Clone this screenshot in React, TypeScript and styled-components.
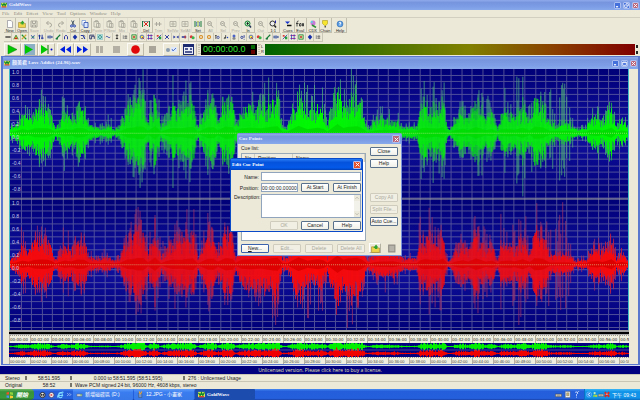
import React from 'react';
import styled, { createGlobalStyle, css } from 'styled-components';

const UI = '"Liberation Sans", "Noto Sans CJK TC", sans-serif';
const SERIF = '"Liberation Serif", "Noto Sans CJK TC", serif';

const GlobalStyle = createGlobalStyle`
  * { box-sizing: border-box; }
  html, body, #root { height: 100%; }
  body { margin: 0; overflow: hidden; background: #ece9d8; font: 5px/6px ${UI}; color: #222; }
  button, input, textarea { font: inherit; color: inherit; margin: 0; padding: 0; }
  button { border: 0; background: none; }
`;

const Desktop = styled.div`
  display: flex;
  flex-direction: column;
  min-height: 100vh;
`;

const TitleBar = styled.header<{ $active?: boolean; $height: number }>`
  display: flex;
  flex: none;
  align-items: center;
  gap: 2px;
  height: ${p => p.$height}px;
  padding: 0 1px;
  font: bold 5px/8px ${SERIF};
  color: ${p => (p.$active ? '#fff' : '#eef3ff')};
  background: ${p =>
    p.$active
      ? 'linear-gradient(#2a7df5, #0553dd 30%, #0458e8 80%, #0340b8)'
      : 'linear-gradient(#8fabec, #7794df 25%, #7d9ee6 70%, #88a9ea)'};
  h1, h2 { flex: 1; margin: 0; font: inherit; white-space: nowrap; }
`;

const CaptionButton = styled.button<{ $close?: boolean; $active?: boolean }>`
  display: grid;
  place-items: center;
  width: 7px;
  height: 7px;
  border: 1px solid #a9bdf0;
  border-radius: 1px;
  color: #fff;
  background: ${p => (p.$close ? (p.$active ? '#e2512b' : '#b9657c') : '#4470dc')};
  svg { width: 5px; height: 5px; }
`;

const MenuBar = styled.nav`
  display: flex;
  gap: 4px;
  height: 8px;
  padding: 1px 2px;
  border-bottom: 1px solid #d2cfc0;
  font-family: ${SERIF};
  button { height: 6px; color: #8f8d82; line-height: 6px; }
`;

const ToolRow = styled.div`
  display: flex;
  flex: none;
  height: 15px;
  padding-left: 4px;
  gap: 2px;
`;

const ToolGroup = styled.div<{ $width: number }>`
  display: flex;
  width: ${p => p.$width}px;
`;

const ToolButton = styled.button<{ $off?: boolean }>`
  display: flex;
  flex: 1 1 0;
  min-width: 0;
  flex-direction: column;
  align-items: center;
  padding-top: 2px;
  font-size: 4px;
  line-height: 5px;
  white-space: nowrap;
  color: ${p => (p.$off ? '#aaa89c' : '#222')};
  border-right: 1px solid ${p => (p.$off ? '#e2dfd0' : '#c2bfae')};
  border-bottom: 1px solid ${p => (p.$off ? '#e2dfd0' : '#c2bfae')};
  svg { width: 8px; height: 8px; flex: none; }
`;

const EffectRow = styled.div`
  display: flex;
  flex: none;
  width: 319px;
  height: 9px;
  margin-left: 4px;
`;

const EffectButton = styled.button`
  display: grid;
  flex: 1 1 0;
  min-width: 0;
  place-items: center;
  border-right: 1px solid #cbc8b8;
  border-bottom: 1px solid #cbc8b8;
  svg { width: 6px; height: 6px; }
`;

const ControlRow = styled.div`
  display: flex;
  flex: none;
  align-items: center;
  height: 14px;
  padding: 0 2px 0 4px;
`;

const TransportButton = styled.button<{ $off?: boolean; $gap?: number }>`
  display: grid;
  place-items: center;
  width: 17px;
  height: 13px;
  margin-right: ${p => p.$gap ?? 0}px;
  border: 1px solid;
  border-color: ${p => (p.$off ? '#ece9d8' : '#fbfaf4 #bdbaaa #bdbaaa #fbfaf4')};
  svg { width: 13px; height: 11px; }
`;

const Grip = styled.i`
  width: 2px;
  height: 10px;
  margin: 0 1px;
  border: 1px dotted #c8c5b5;
`;

const Clock = styled.output`
  display: flex;
  align-items: center;
  justify-content: space-between;
  width: 56px;
  height: 11px;
  padding: 0 2px;
  background: #000;
  color: #2ee62e;
  font: 9px/11px ${UI};
`;

const Lamps = styled.span`
  display: grid;
  gap: 1px;
  i { width: 4px; height: 4px; background: #006400; }
  i + i { background: #640000; }
`;

const MeterLabels = styled.span`
  display: grid;
  width: 4px;
  font-size: 4px;
  line-height: 5px;
`;

const Meter = styled.div`
  flex: 1;
  height: 11px;
  background: linear-gradient(90deg, #006400, #808000 55%, #8a4000 78%, #800000);
`;

const Peaks = styled.span`
  display: grid;
  gap: 3px;
  margin-left: 1px;
  i { width: 2px; height: 3px; background: #222; }
`;

const Document = styled.section`
  display: flex;
  flex: 1;
  flex-direction: column;
  border: 1px solid #5b78cf;
  border-width: 1px 2px;
  margin: 0 0 0 1px;
  background: #ece9d8;
`;

const DocumentBody = styled.div`
  display: flex;
  flex: 1;
  flex-direction: column;
  margin: 0 9px 0 6px;
`;

const Tracks = styled.div`
  display: grid;
  position: relative;
  flex: 1;
  min-height: 200px;
  background: #000080;
  border-left: 1px solid #3fb9c8;
  border-right: 1px solid #3fb9c8;
  > svg { position: absolute; inset: 0; width: 100%; height: 100%; }
`;

const Scale = styled.div`
  display: flex;
  position: relative;
  flex-direction: column;
  justify-content: space-between;
  padding: 0 0 7px 2px;
  font-size: 5px;
  line-height: 6px;
  color: #c8cce8;
`;

const BlackBar = styled.div`
  flex: none;
  height: 5px;
  border-top: 2px solid #a0a0a0;
  border-bottom: 1px solid #aaa;
  background: #000;
`;

const Ruler = styled.div<{ $dim?: boolean }>`
  display: flex;
  flex: none;
  height: ${p => (p.$dim ? 7 : 8)}px;
  overflow: hidden;
  background: #f0eedf;
  font: 4px/6px ${p => (p.$dim ? UI : '"DejaVu Sans", sans-serif')};
  color: ${p => (p.$dim ? '#44443e' : '#2a2a26')};
`;

const Tick = styled.span<{ $span: number }>`
  flex: ${p => p.$span} 1 0;
  min-width: 0;
  padding-top: 2px;
  line-height: 6px;
  overflow: hidden;
  white-space: nowrap;
  background: repeating-linear-gradient(90deg, #9a988c 0 1px, transparent 1px 2px) 0 0 / 100% 1px no-repeat;
  border-left: 1px solid #b3b0a2;
`;

const Overview = styled.div`
  flex: none;
  height: 14px;
  background: #000080;
  svg { display: block; width: 100%; height: 100%; }
`;

const Banner = styled.a`
  flex: none;
  height: 9px;
  border-top: 1px solid #d7dcf0;
  background: #000080;
  color: #e6e4b0;
  font: 5px/8px "Open Sans", sans-serif;
  text-align: center;
  text-decoration: none;
`;

const StatusRow = styled.div`
  display: grid;
  flex: none;
  grid-template-columns: 28px 45px 113px 1fr;
  height: 7px;
  align-items: center;
  border-top: 1px solid #c9c6b6;
  font-size: 5px;
  white-space: nowrap;
`;

const Cell = styled.span<{ $center?: boolean; $wide?: boolean }>`
  display: flex;
  align-items: center;
  justify-content: space-between;
  padding-right: 1px;
  span { flex: 1; text-align: ${p => (p.$center ? 'center' : 'left')}; padding-left: ${p => (p.$center ? 0 : 2)}px; }
  ${p => p.$wide && css`grid-column: 3 / -1; padding-left: 0;`}
  &:first-child span { padding-left: 5px; }
  i { width: 2px; height: 4px; border: 1px solid #77756a; }
`;

const Taskbar = styled.footer`
  display: flex;
  flex: none;
  height: 11px;
  margin-top: 1px;
  background: linear-gradient(#4b8cf2, #245edb 20%, #2560dc 85%, #1941a5);
  color: #fff;
`;

const StartButton = styled.button`
  display: flex;
  align-items: center;
  justify-content: center;
  gap: 2px;
  width: 34px;
  border-radius: 0 4px 4px 0;
  background: linear-gradient(#6cb865, #37923a 25%, #3a993c 80%, #277029);
  font: italic bold 6px/10px ${UI};
  color: #fff;
  svg { width: 8px; height: 8px; }
`;

const QuickLaunch = styled.div`
  display: flex;
  align-items: center;
  gap: 2px;
  width: 39px;
  padding-left: 5px;
  svg { width: 7px; height: 8px; }
`;

const TaskButton = styled.button<{ $active?: boolean }>`
  display: flex;
  align-items: center;
  gap: 2px;
  width: 60px;
  margin-right: 1px;
  padding-left: 3px;
  border-radius: 1px;
  font: ${p => (p.$active ? `bold 5px/9px ${SERIF}` : `5px/9px ${UI}`)};
  white-space: nowrap;
  color: #fff;
  background: ${p => (p.$active ? '#1b4cae' : 'linear-gradient(#5a9bf8, #3a7df0 30%, #3878e8)')};
  svg { width: 7px; height: 7px; flex: none; }
`;

const TrayIcons = styled.div`
  display: flex;
  align-items: center;
  gap: 2px;
  margin-left: auto;
  padding-right: 4px;
  svg { width: 7px; height: 7px; }
`;

const Tray = styled.div`
  display: flex;
  align-items: center;
  padding: 0 4px 0 1px;
  border-left: 1px solid #0b6fc4;
  background: linear-gradient(#3fb6f4, #0f93e8 25%, #1193e9 80%, #0a6cc0);
  font-size: 5px;
  line-height: 10px;
  white-space: nowrap;
  svg { width: 6px; height: 7px; }
  time { margin-left: 2px; }
`;

const Dialog = styled.section<{ $active?: boolean }>`
  position: absolute;
  display: flex;
  flex-direction: column;
  border: 1px solid ${p => (p.$active ? '#0a49c8' : '#7b93dc')};
  border-radius: 2px 2px 0 0;
  background: #ece9d8;
  ${CaptionButton} { width: 8px; height: 8px; }
`;

const CueDialog = styled(Dialog)`
  left: 237px;
  top: 133px;
  width: 165px;
  height: 123px;
`;

const EditDialog = styled(Dialog)`
  left: 230px;
  top: 158px;
  width: 133px;
  height: 74px;
`;

const CueBody = styled.div`
  display: grid;
  flex: 1;
  grid-template-columns: 125px 28px;
  grid-template-rows: 6px 1fr 10px;
  column-gap: 4px;
  row-gap: 2px;
  padding: 1px 3px 2px;
`;

const CueLabel = styled.label`
  line-height: 7px;
`;

const CueTable = styled.table`
  width: 100%;
  height: 100%;
  border: 1px solid #9aa9b8;
  border-collapse: separate;
  border-spacing: 0;
  table-layout: fixed;
  background: #fff;
  th {
    height: 8px;
    padding: 0 0 0 3px;
    border-right: 1px solid #d0cdbd;
    background: #efecdf;
    font-weight: normal;
    line-height: 6px;
    text-align: left;
  }
  th:nth-child(1) { width: 13px; }
  th:nth-child(2) { width: 38px; }
  td { padding: 0; }
`;

const SideButtons = styled.div`
  display: flex;
  grid-row: 1 / 3;
  grid-column: 2;
  flex-direction: column;
  gap: 3px;
  padding-top: 2px;
`;

const Spacer = styled.div`
  flex: none;
  height: 19px;
`;

const BottomButtons = styled.div`
  display: grid;
  grid-column: 1 / -1;
  grid-template-columns: repeat(4, 28px) 12px 12px;
  column-gap: 4px;
  align-items: center;
  svg { width: 9px; height: 9px; justify-self: center; }
`;

const DialogButton = styled.button<{ $strong?: boolean }>`
  width: 28px;
  height: 9px;
  border: 1px solid ${p => (p.$strong ? '#3a62ad' : '#58708c')};
  border-radius: 1px;
  background: linear-gradient(#fff, #f1f0e8);
  font-size: 5px;
  line-height: 7px;
  text-align: center;
  white-space: nowrap;
  &:disabled { border-color: #cfccbd; background: #f1efe4; color: #aaa89b; }
`;

const IconButton = styled.button`
  display: grid;
  place-items: center;
  height: 10px;
  border: 1px solid;
  border-color: #fff #b5b2a2 #b5b2a2 #fff;
`;

const EditForm = styled.form`
  display: grid;
  flex: 1;
  grid-template-columns: 25px 37px 29px 30px;
  grid-template-rows: 9px 9px 24px 10px;
  column-gap: 2px;
  row-gap: 2px;
  padding: 2px 3px;
  align-items: center;
  label { text-align: right; }
  label[for='description'] { align-self: start; }
  button { justify-self: end; }
`;

const fieldStyle = css`
  width: 100%;
  height: 100%;
  border: 1px solid #90a5bd;
  border-radius: 0;
  background: #fff;
  font-size: 5px;
  line-height: 7px;
`;

const Field = styled.input<{ $wide?: boolean }>`
  ${fieldStyle}
  ${p => p.$wide && css`grid-column: 2 / -1;`}
`;

const DescriptionBox = styled.div`
  display: grid;
  grid-column: 2 / -1;
  grid-template-columns: 1fr 6px;
  height: 100%;
  border: 1px solid #90a5bd;
  background: #fff;
`;

const Description = styled.textarea`
  ${fieldStyle}
  border: 0;
  resize: none;
  overflow: hidden;
`;

const ScrollTrack = styled.div`
  display: flex;
  flex-direction: column;
  justify-content: space-between;
  background: #f3f2ea;
  color: #aaa89a;
  svg { width: 6px; height: 6px; background: #eceadd; }
`;

/* ---------- icons ---------- */

const shapes: Record<string, React.ReactNode> = {
  doc: <path d="M3 1h7l3 3v11H3z" fill="#fff" stroke="#667" />,
  folder: <><path d="M1 5h5l2 2h7v8H1z" fill="#efd44c" stroke="#997d20" /><path d="M4 7l5-6 4 5h-2v3H7V7z" fill="#31a52e" /></>,
  save: <path d="M2 2h12v12H2zM5 2v5h6V2M5 14v-4h6v4" fill="none" stroke="currentColor" strokeWidth="2" />,
  undo: <path d="M3 6h6a4 4 0 010 8M7 2L3 6l4 4" fill="none" stroke="currentColor" strokeWidth="2" />,
  redo: <path d="M13 6H7a4 4 0 000 8M9 2l4 4-4 4" fill="none" stroke="currentColor" strokeWidth="2" />,
  cut: <><path d="M5 1l5 9M10 1L6 10" stroke="#456" strokeWidth="2" /><circle cx="5" cy="12" r="2" fill="none" stroke="#2244bb" strokeWidth="2" /><circle cx="11" cy="12" r="2" fill="none" stroke="#2244bb" strokeWidth="2" /></>,
  copy: <><path d="M2 1h7v9H2z" fill="#fff" stroke="#36c" /><path d="M6 5h8v10H6z" fill="#dbe6ff" stroke="#24a" strokeWidth="1.5" /></>,
  paste: <path d="M2 3h9v11H2zM5 1h4v3H5zM7 7h7v8H7z" fill="none" stroke="currentColor" strokeWidth="1.6" />,
  del: <><path d="M1 2v12M15 2v12" stroke="#1b7a48" strokeWidth="2" /><path d="M4 4l8 8M12 4l-8 8" stroke="#d22" strokeWidth="2" /><path d="M1 3h14" stroke="#234" /></>,
  trim: <path d="M1 8h14M5 4v8M11 4v8" stroke="currentColor" strokeWidth="2" />,
  box: <path d="M2 3h12v10H2zM4 8h8M8 3v10" fill="none" stroke="currentColor" strokeWidth="1.6" />,
  set: <><path d="M2 2v12M14 2v12" stroke="#167b3c" strokeWidth="2" /><path d="M5 4h6v8H5z" fill="#b8e3f7" stroke="#248" /><path d="M8 2v12" stroke="#cc3" strokeWidth="2" /></>,
  lens: <path d="M10 10l4 5M7 3a4 4 0 110 8 4 4 0 010-8M5 7h4" fill="none" stroke="currentColor" strokeWidth="2" />,
  lensOn: <><path d="M10 10l4 5" stroke="#235" strokeWidth="3" /><circle cx="7" cy="7" r="5" fill="#b5efc0" stroke="#187c35" strokeWidth="2" /><path d="M5 7h5M7 4v6" stroke="#111" strokeWidth="1.5" /></>,
  one: <><path d="M10 10l4 5" stroke="#222" strokeWidth="3" /><circle cx="7" cy="7" r="5" fill="#eee" stroke="#333" strokeWidth="2" /><path d="M13 1v5" stroke="#22a" strokeWidth="2" /></>,
  cue: <><path d="M2 3h10L7 8z" fill="#1532c9" /><path d="M6 11h9" stroke="#111" strokeWidth="3" /></>,
  foo: <path d="M5 2q-3 0-3 3v8M0 7h5M8 7h2v5H7V7M13 7h2v5h-2z" fill="none" stroke="#333" strokeWidth="1.8" />,
  cdx: <><circle cx="8" cy="6" r="5" fill="#c779d8" /><path d="M8 6L3 5a5 5 0 013-4z" fill="#51dbe0" /><path d="M6 10l8 5" stroke="#2c8f35" strokeWidth="3" /></>,
  bulb: <><path d="M3 1h10v6l-3 4H7L3 7z" fill="#f6e52c" stroke="#9c8c10" /><path d="M7 12h3v3H7z" fill="#555" /></>,
  help: <><circle cx="8" cy="8" r="6" fill="#5899df" stroke="#2864aa" /><path d="M6 6q3-3 4 0l-2 3v2" fill="none" stroke="#fff" strokeWidth="2" /></>,
  start: <><path d="M1 3l5-1v5H1z" fill="#f0522a" /><path d="M8 2l6 1v5L8 7z" fill="#8fd33c" /><path d="M1 9h5v5l-5-1z" fill="#4d8df0" /><path d="M8 9l6 1v4l-6 1z" fill="#f7cb32" /></>,
  logo: <><path d="M0 2h16v12H0z" fill="#dfe35c" /><path d="M1 4l4 6 3-6 3 6 4-7" fill="none" stroke="#128a2a" strokeWidth="3" /><path d="M2 13h12" stroke="#d43a2a" strokeWidth="3" /></>,
  drive: <><path d="M2 7h12v5H2z" fill="#d7dae0" stroke="#555" /><path d="M10 9h3" stroke="#2a2" strokeWidth="2" /></>,
  paint: <><path d="M3 5h8v10H4z" fill="#6f92cf" stroke="#345" /><path d="M5 1l2 6M11 1L8 7" stroke="#e5a33a" strokeWidth="2.5" /></>,
  ball: <><circle cx="8" cy="8" r="6" fill="#eee" stroke="#222" strokeWidth="2" /><path d="M5 6h2v3H5zM9 6h2v3H9zM6 12h5" fill="#111" stroke="#111" /></>,
  player: <><circle cx="8" cy="8" r="6" fill="#f3f0ea" stroke="#447" strokeWidth="2" /><path d="M6 5l5 3-5 3z" fill="#d33" /></>,
  ie: <path d="M14 9H4a4 4 0 008 2M4 7a4 4 0 018-1v2M2 14Q0 10 6 5t9-3" fill="none" stroke="#7fdcff" strokeWidth="2.4" />,
  chevron: <path d="M3 4l3 3-3 3M8 4l3 3-3 3" fill="none" stroke="#dfe9ff" strokeWidth="1.5" />,
  keyboard: <><path d="M1 7h14v6H1z" fill="#e4dfcf" stroke="#333" /><path d="M3 9h10M4 11h8" stroke="#555" /></>,
  ime: <><path d="M3 1h11v14H3z" fill="#fff" stroke="#555" /><path d="M6 4h5v7H6z" fill="#ccb46c" stroke="#665" /></>,
  query: <path d="M5 3q6-3 6 2L8 8v3M8 13v2M12 1h2" fill="none" stroke="#dce8ff" strokeWidth="2" />,
  back: <><circle cx="8" cy="8" r="7" fill="#2a8df0" stroke="#bfe4ff" /><path d="M10 4L6 8l4 4" fill="none" stroke="#fff" strokeWidth="2.5" /></>,
  person: <><circle cx="7" cy="4" r="3" fill="#c6edbf" /><path d="M2 14q1-8 9-5l2 5z" fill="#7fd458" /><path d="M9 9h5v5H9z" fill="#c4cf33" /></>,
  alert: <><path d="M2 2l12 12M14 2L2 14" stroke="#d82a20" strokeWidth="5" /><path d="M5 7h5" stroke="#fff" strokeWidth="2" /></>,
  min: <path d="M3 12h7" stroke="currentColor" strokeWidth="4" />,
  max: <path d="M2 3h12v11H2zM2 5h12" fill="none" stroke="currentColor" strokeWidth="2.5" />,
  restore: <path d="M6 2h8v7h-3M2 6h8v8H2z" fill="none" stroke="currentColor" strokeWidth="2.5" />,
  close: <path d="M2 2l12 12M14 2L2 14" stroke="currentColor" strokeWidth="3" />,
  up: <path d="M4 10l4-4 4 4" fill="none" stroke="currentColor" strokeWidth="2" />,
  down: <path d="M4 6l4 4 4-4" fill="none" stroke="currentColor" strokeWidth="2" />,
  disk: <path d="M3 2h11v12H3z" fill="#b5b3aa" stroke="#8f8d84" strokeWidth="2" />,
};

const Icon = ({ name }: { name: string }) => (
  <svg viewBox="0 0 16 16" aria-hidden="true">{shapes[name]}</svg>
);

const effects: React.ReactNode[] = [
  <path d="M1 8h14" stroke="#111" strokeWidth="3" />,
  <><path d="M2 14L8 3l6 11" fill="#e7b12d" stroke="#1c7a32" strokeWidth="2" /><path d="M5 12h6" stroke="#c22" strokeWidth="3" /></>,
  <><path d="M2 2l12 12" stroke="#179132" strokeWidth="3" /><path d="M14 2L2 14" stroke="#ca3" strokeWidth="3" /></>,
  <><path d="M3 3l8 10M12 3L4 13" stroke="#1a2fae" strokeWidth="2" /><path d="M4 8h8" stroke="#1b9a45" strokeWidth="2" /></>,
  <path d="M4 2v12M1 5h6M11 2v12M8 11h7" stroke="#1a2f9a" strokeWidth="2.5" />,
  <><path d="M1 8h14" stroke="#234" strokeWidth="2" /><path d="M3 4v8M8 3v10M13 5v6" stroke="#24b" strokeWidth="2" /></>,
  <path d="M2 14L14 2M3 13h5" stroke="#187a3a" strokeWidth="3" />,
  <path d="M4 14V7q4-8 8 0v7" fill="none" stroke="#1d2a9c" strokeWidth="2.5" />,
  <path d="M8 1l6 7-6 7-6-7z" fill="#1730a8" />,
  <><path d="M2 4h6l5 9" fill="none" stroke="#2336a4" strokeWidth="3" /><path d="M9 3l5 3M3 12h5" stroke="#555" strokeWidth="2" /></>,
  <path d="M2 3h12M2 3v10h5V6h7v7" fill="none" stroke="#263066" strokeWidth="2.4" />,
  <><path d="M1 1h14v14H1z" fill="#bce9ea" stroke="#45a2a4" /><circle cx="8" cy="8" r="4" fill="none" stroke="#176" strokeWidth="2" /></>,
  <path d="M2 8q3-4 6 0t6 0" fill="none" stroke="#23389c" strokeWidth="2" />,
  <path d="M8 2v12M5 5l3-3 3 3M5 12h6" fill="none" stroke="#222" strokeWidth="2.2" />,
  <><path d="M2 3h3v10H2zM9 3h3v10H9z" fill="#999" /><path d="M6 6h8M6 11h8" stroke="#555" strokeWidth="2" /></>,
  <><path d="M2 2h12v12H2z" fill="#c6e09b" stroke="#228a44" strokeWidth="2" /><path d="M5 5l6 6M11 5l-6 6" stroke="#c33" strokeWidth="2" /></>,
  <><circle cx="8" cy="8" r="5" fill="#f3e94b" stroke="#3452ba" strokeWidth="2" /><path d="M8 8l6 6" stroke="#b22" strokeWidth="2" /></>,
  <><path d="M1 4h14M1 12h14" stroke="#b33aa0" strokeWidth="3" /><path d="M4 1v14M11 1v14" stroke="#2246b4" strokeWidth="2" /></>,
  <><path d="M2 3h5v4H2z" fill="#d22" /><path d="M8 7h6v7H8z" fill="#23a13a" /><path d="M2 14L14 2" stroke="#22369d" strokeWidth="2" /></>,
  <path d="M3 3l10 10M13 3L3 13" stroke="#26359c" strokeWidth="2.5" />,
  <><path d="M1 4l6 4-6 4zM15 4L9 8l6 4z" fill="#26359c" /></>,
  <><path d="M2 8h12" stroke="#26359c" strokeWidth="4" /><path d="M11 4v8" stroke="#c33" strokeWidth="3" /></>,
  <><circle cx="6" cy="7" r="4" fill="#e03a3a" /><circle cx="11" cy="10" r="4" fill="#38b54a" /></>,
  <circle cx="8" cy="8" r="4" fill="none" stroke="#d98a1c" strokeWidth="3" />,
  <><path d="M3 4h4M5 4v9" stroke="#222" strokeWidth="2" /><circle cx="11" cy="9" r="3" fill="none" stroke="#23389c" strokeWidth="2" /></>,
  <><path d="M7 3v8q-4 3-4 0t4-1" fill="none" stroke="#222" strokeWidth="2" /><circle cx="12" cy="9" r="2" fill="#24b" /></>,
  <><circle cx="8" cy="5" r="4" fill="#4d65c8" /><path d="M5 10h6v4H5z" fill="#a8a8b8" stroke="#333" /></>,
  <path d="M2 9a3 3 0 106 0 3 3 0 10-6 0M11 3v7M11 13v2" fill="none" stroke="#2b3d9a" strokeWidth="2.4" />,
];
const effectOrder = [0, 1, 2, 3, 4, 5, 6, 7, 8, 9, 10, 11, 12, 13, 14, 15, 16, 17, 18, 19, 20, 21, 22, 23, 23, 24, 25, 26, 27, 16, 22, 6, 5, 18, 17, 15, 8, 14];

const Wave = styled.svg``;

/* ---------- waveform ---------- */

// [x, body amplitude, peak amplitude] along the 620-unit time axis
const envelope: [number, number, number][] = [
  [0, 5, 8], [5, 8, 14], [12, 20, 38], [18, 14, 22], [24, 24, 34], [31, 26, 42], [37, 25, 34], [41, 18, 24],
  [45, 5, 8], [49, 12, 16], [54, 20, 48], [61, 16, 20], [67, 26, 36], [74, 24, 32], [79, 8, 14], [86, 6, 10],
  [99, 8, 20], [104, 3, 5], [111, 10, 15], [117, 26, 35], [123, 28, 46], [127, 34, 55], [133, 34, 60],
  [138, 10, 20], [145, 36, 56], [151, 6, 20], [157, 18, 24], [163, 26, 54], [171, 24, 32], [178, 30, 62],
  [183, 32, 62], [188, 5, 9], [198, 30, 52], [204, 30, 34], [208, 14, 18], [216, 34, 45], [223, 30, 38],
  [226, 8, 14], [232, 25, 33], [241, 28, 46], [251, 24, 42], [263, 34, 60], [268, 36, 64], [273, 6, 8],
  [278, 6, 8], [283, 22, 28], [289, 38, 48], [298, 20, 54], [308, 28, 48], [314, 22, 46], [318, 8, 12],
  [328, 48, 58], [334, 26, 44], [338, 32, 64], [348, 36, 64], [353, 24, 40], [358, 4, 7], [368, 14, 24],
  [384, 16, 35], [393, 6, 10], [404, 6, 14], [408, 7, 9], [411, 22, 55], [416, 28, 48], [423, 24, 62],
  [428, 22, 36], [434, 30, 58], [438, 6, 14], [441, 3, 4], [446, 14, 20], [454, 22, 36], [459, 14, 18],
  [467, 32, 54], [477, 14, 38], [483, 20, 28], [489, 4, 6], [492, 18, 46], [501, 20, 34], [506, 16, 56],
  [514, 28, 64], [521, 12, 26], [526, 34, 64], [534, 30, 38], [541, 10, 46], [546, 10, 34], [554, 10, 60],
  [561, 10, 30], [566, 4, 6], [578, 5, 10], [581, 14, 22], [589, 18, 30], [594, 12, 18], [603, 28, 36],
  [608, 6, 12], [613, 13, 20], [620, 6, 12],
];

const noise = (n: number) => {
  const v = Math.sin(n * 127.1 + 31.7) * 43758.5453;
  return v - Math.floor(v);
};

const sample = (x: number): [number, number] => {
  let i = 1;
  while (i < envelope.length - 1 && envelope[i][0] < x) i++;
  const [x0, a0, b0] = envelope[i - 1];
  const [x1, a1, b1] = envelope[i];
  const t = Math.min(1, Math.max(0, (x - x0) / (x1 - x0)));
  return [a0 + (a1 - a0) * t, b0 + (b1 - b0) * t];
};

const strokes = (mid: number, kind: 'peak' | 'mid' | 'body' | 'core', seed: number, scale = 1) => {
  let d = '';
  for (let x = 0; x < 620; x++) {
    const [body, peak] = sample(x);
    const n = noise(x + seed);
    const m = noise(x * 3 + seed + 900);
    let up = 0;
    let down = 0;
    if (kind === 'peak') {
      if (n < 0.64) continue;
      up = body + (peak - body) * (0.3 + 0.9 * m);
      down = body + (peak - body) * (0.1 + 0.95 * noise(x + seed + 50));
    } else if (kind === 'mid') {
      up = body * (0.6 + 0.75 * n);
      down = body * (0.55 + 0.7 * n);
    } else if (kind === 'body') {
      up = body * (0.35 + 0.7 * m);
      down = body * (0.35 + 0.65 * m);
    } else {
      up = body * 0.18;
      down = body * 0.18;
    }
    up = Math.min(64, up) * scale;
    down = Math.min(64, down) * scale;
    d += `M${x + 0.5} ${(mid - up).toFixed(1)}V${(mid + down).toFixed(1)}`;
  }
  return d;
};

interface Tone { peak: string; mid: string; body: string; core: string }
const green: Tone = { peak: '#4fae7c', mid: '#22b848', body: '#00fa00', core: '#00dc00' };
const red: Tone = { peak: '#a03068', mid: '#c01c40', body: '#fa0a0a', core: '#dc0000' };

const Channel = ({ mid, tone, seed }: { mid: number; tone: Tone; seed: number }) => (
  <g fill="none">
    <path d={strokes(mid, 'peak', seed)} stroke={tone.peak} opacity="0.75" />
    <path d={strokes(mid, 'mid', seed)} stroke={tone.mid} opacity="0.85" />
    <path d={strokes(mid, 'body', seed)} stroke={tone.body} />
    <path d={strokes(mid, 'core', seed)} stroke={tone.core} />
    <path d={`M0 ${mid}.5H620`} stroke="#d8e8a0" strokeDasharray="1 1" opacity="0.6" />
  </g>
);

const gridX = Array.from({ length: 58 }, (_, i) => `M${Math.round((i + 1) * 10.53)}.5 0V262`).join('');
const gridY = Array.from({ length: 40 }, (_, i) => `M0 ${Math.round((i + 1) * 6.5) - 1}.5H620`).join('');

const Waveform = () => (
  <Wave viewBox="0 0 620 262" preserveAspectRatio="none" role="img" aria-label="Stereo waveform">
    <defs>
      <linearGradient id="bg" x1="0" y1="0" x2="0" y2="1">
        <stop offset="0" stopColor="#000078" />
        <stop offset="0.5" stopColor="#1010a0" />
        <stop offset="1" stopColor="#000078" />
      </linearGradient>
    </defs>
    <rect width="620" height="131" fill="url(#bg)" />
    <rect y="131" width="620" height="131" fill="url(#bg)" />
    <path d={gridX + gridY} stroke="#7d7da8" opacity="0.62" />
    <Channel mid={64} tone={green} seed={0} />
    <Channel mid={196} tone={red} seed={4} />
    <path d="M0 130.5H620" stroke="#a5a89c" strokeWidth="1" />
  </Wave>
);

const overviewLine = (mid: number, seed: number) => strokes(mid, 'mid', seed, 0.11) + `M0 ${mid}H620`;

const minutes = Array.from({ length: 30 }, (_, i) => `00:${String(i * 2).padStart(2, '0')}:00`);
const levels = ['1.0', '0.8', '0.6', '0.4', '0.2', '0.0', '-0.2', '-0.4', '-0.6', '-0.8'];

const TimeRuler = ({ dim }: { dim?: boolean }) => (
  <Ruler $dim={dim}>
    {minutes.map((m, i) => <Tick key={m} $span={i === 29 ? 51 : 120}>{m}</Tick>)}
  </Ruler>
);

type Tool = [string, string, boolean?];
const toolGroups: { width: number; tools: Tool[] }[] = [
  { width: 37, tools: [['New', 'doc'], ['Open', 'folder'], ['Save', 'save', true]] },
  {
    width: 122,
    tools: [['Undo', 'undo', true], ['Redo', 'redo', true], ['Cut', 'cut'], ['Copy', 'copy'], ['Paste', 'paste', true],
      ['P.New', 'paste', true], ['Mix', 'paste', true], ['Repl', 'paste', true], ['Del', 'del'], ['Trim', 'trim', true]],
  },
  {
    width: 113,
    tools: [['SelVw', 'box', true], ['SelAll', 'box', true], ['Set', 'set'], ['All', 'lens', true], ['Sel', 'lens', true],
      ['Prev', 'lens', true], ['In', 'lensOn'], ['Out', 'lens', true], ['1:1', 'one']],
  },
  { width: 50, tools: [['Cues', 'cue'], ['Eval', 'foo'], ['CDX', 'cdx'], ['Chain', 'bulb']] },
  { width: 13, tools: [['Help', 'help']] },
];

const T = ({ label, off, gap, children }: { label: string; off?: boolean; gap?: number; children: React.ReactNode }) => (
  <TransportButton aria-label={label} $off={off} $gap={gap}>
    <svg viewBox="0 0 13 11">{children}</svg>
  </TransportButton>
);

const Caption = ({ middle }: { middle: string }) => (
  <>
    <CaptionButton aria-label="Minimize"><Icon name="min" /></CaptionButton>
    <CaptionButton aria-label="Resize"><Icon name={middle} /></CaptionButton>
    <CaptionButton aria-label="Close" $close><Icon name="close" /></CaptionButton>
  </>
);

const AppLogo = styled.span`
  display: grid;
  svg { width: 6px; height: 6px; }
`;

export default function App() {
  return (
    <Desktop>
      <GlobalStyle />
      <TitleBar $height={10}>
        <AppLogo><Icon name="logo" /></AppLogo>
        <h1>GoldWave</h1>
        <Caption middle="restore" />
      </TitleBar>
      <MenuBar>
        {['File', 'Edit', 'Effect', 'View', 'Tool', 'Options', 'Window', 'Help'].map(m => (
          <button key={m}>{m}</button>
        ))}
      </MenuBar>
      <ToolRow>
        {toolGroups.map(g => (
          <ToolGroup key={g.width} $width={g.width}>
            {g.tools.map(([label, icon, off]) => (
              <ToolButton key={label} $off={off}><Icon name={icon} />{label}</ToolButton>
            ))}
          </ToolGroup>
        ))}
      </ToolRow>
      <EffectRow>
        {effectOrder.map((shape, i) => (
          <EffectButton key={i} aria-label={`Effect ${i + 1}`}>
            <svg viewBox="0 0 16 16">{effects[shape]}</svg>
          </EffectButton>
        ))}
      </EffectRow>
      <ControlRow>
        <T label="Play"><path d="M2 1l9 4.5L2 10z" fill="#00c800" stroke="#087a08" strokeWidth=".5" /></T>
        <T label="Play selection"><path d="M1 0h11v11H1z" fill="#8db0c4" /><path d="M2 1l8 4.5L2 10z" fill="#00c800" /></T>
        <T label="Play from cue" gap={2}><path d="M1 1l7 4.5L1 10z" fill="#00c800" /><path d="M8 1v9" stroke="#087a08" /><circle cx="11.5" cy="5.5" r="1" fill="#0000c8" /></T>
        <T label="Rewind"><path d="M6 2v7L1 5.5zM12 2v7L7 5.5z" fill="#0020e0" /></T>
        <T label="Fast forward"><path d="M1 2v7l5-3.500zM7 2v7l5-3.500z" fill="#0020e0" /></T>
        <T label="Pause" off><path d="M3 2h3v7H3zM7 2h3v7H7z" fill="#b4b1a4" /></T>
        <T label="Stop" off gap={2}><path d="M3 2h7v7H3z" fill="#b4b1a4" /></T>
        <T label="Record"><circle cx="6.5" cy="5.5" r="4.3" fill="#e00808" /></T>
        <T label="Stop recording" off gap={2}><path d="M3 2h7v7H3z" fill="#a9a699" /></T>
        <T label="Properties"><circle cx="3" cy="6" r="2" fill="#8a9bb0" /><path d="M6 3h6v5H6z" fill="#dfe8f8" /><path d="M7 5l1 2 3-3" fill="none" stroke="#57c" /></T>
        <T label="Control window"><path d="M1 0h11v11H1z" fill="#1c2b70" /><path d="M2 3h9v7H2z" fill="#e8ecf8" /><path d="M3 5h3M8 5h2M3 8h7" stroke="#1c2b70" strokeWidth="1.5" /></T>
        <Grip />
        <Clock><span>00:00:00.0</span><Lamps><i /><i /></Lamps></Clock>
        <Grip />
        <MeterLabels><span>L</span><span>R</span></MeterLabels>
        <Meter />
        <Peaks><i /><i /></Peaks>
      </ControlRow>

      <Document>
        <TitleBar $height={12}>
          <AppLogo><Icon name="logo" /></AppLogo>
          <h2>顏美君 Love Addict (24-96).wav</h2>
          <Caption middle="max" />
        </TitleBar>
        <DocumentBody>
          <Tracks>
            <Waveform />
            {[0, 1].map(c => (
              <Scale key={c}>{levels.map(l => <span key={l}>{l}</span>)}</Scale>
            ))}
          </Tracks>
          <BlackBar />
          <TimeRuler />
          <Overview>
            <svg viewBox="0 0 620 14" preserveAspectRatio="none">
              <path d={overviewLine(3.5, 0)} stroke="#00f000" />
              <path d={overviewLine(10.5, 4)} stroke="#f00000" />
              <path d="M0 7H620" stroke="#8888b0" strokeWidth=".5" />
            </svg>
          </Overview>
          <TimeRuler dim />
        </DocumentBody>
      </Document>

      <Banner href="#license">Unlicensed version. Please click here to buy a license.</Banner>
      <StatusRow>
        <Cell><span>Stereo</span><i /></Cell>
        <Cell $center><span>58:51.595</span><i /></Cell>
        <Cell $center><span>0.000 to 58:51.595 (58:51.595)</span><i /></Cell>
        <Cell><span>276 : Unlicensed Usage</span></Cell>
      </StatusRow>
      <StatusRow>
        <Cell><span>Original</span></Cell>
        <Cell $center><span>58:52</span><i /></Cell>
        <Cell $wide><span>Wave PCM signed 24 bit, 96000 Hz, 4608 kbps, stereo</span></Cell>
      </StatusRow>

      <Taskbar>
        <StartButton><Icon name="start" />開始</StartButton>
        <QuickLaunch>
          <Icon name="ball" /><Icon name="player" /><Icon name="ie" /><Icon name="chevron" />
        </QuickLaunch>
        <TaskButton><Icon name="drive" />新增磁碟區 (D:)</TaskButton>
        <TaskButton><Icon name="paint" />12.JPG - 小畫家</TaskButton>
        <TaskButton $active><Icon name="logo" />GoldWave</TaskButton>
        <TrayIcons><Icon name="keyboard" /><Icon name="ime" /><Icon name="query" /></TrayIcons>
        <Tray>
          <Icon name="back" /><Icon name="person" /><Icon name="keyboard" /><Icon name="alert" />
          <time>下午 09:43</time>
        </Tray>
      </Taskbar>

      <CueDialog role="dialog" aria-label="Cue Points">
        <TitleBar $height={10}>
          <h2>Cue Points</h2>
          <CaptionButton aria-label="Close" $close><Icon name="close" /></CaptionButton>
        </TitleBar>
        <CueBody>
          <CueLabel id="cue-list">Cue list:</CueLabel>
          <SideButtons>
            <DialogButton>Close</DialogButton>
            <DialogButton>Help</DialogButton>
            <Spacer />
            <DialogButton disabled>Copy All</DialogButton>
            <DialogButton disabled>Split File...</DialogButton>
            <DialogButton>Auto Cue...</DialogButton>
          </SideButtons>
          <CueTable aria-labelledby="cue-list">
            <thead><tr><th>No.</th><th>Position</th><th>Name</th></tr></thead>
            <tbody><tr><td colSpan={3} /></tr></tbody>
          </CueTable>
          <BottomButtons>
            <DialogButton $strong><u>N</u>ew...</DialogButton>
            <DialogButton disabled>Edit...</DialogButton>
            <DialogButton disabled>Delete</DialogButton>
            <DialogButton disabled>Delete All</DialogButton>
            <IconButton aria-label="Load cues"><Icon name="folder" /></IconButton>
            <Icon name="disk" />
          </BottomButtons>
        </CueBody>
      </CueDialog>

      <EditDialog $active role="dialog" aria-label="Edit Cue Point">
        <TitleBar $active $height={11}>
          <h2>Edit Cue Point</h2>
          <CaptionButton aria-label="Close" $close $active><Icon name="close" /></CaptionButton>
        </TitleBar>
        <EditForm onSubmit={e => e.preventDefault()}>
          <label htmlFor="name">Name:</label>
          <Field id="name" $wide />
          <label htmlFor="position">Position:</label>
          <Field id="position" defaultValue="00:00:00.00000" />
          <DialogButton type="button">At Start</DialogButton>
          <DialogButton type="button">At Finish</DialogButton>
          <label htmlFor="description">Description:</label>
          <DescriptionBox>
            <Description id="description" />
            <ScrollTrack><Icon name="up" /><Icon name="down" /></ScrollTrack>
          </DescriptionBox>
          <span />
          <DialogButton disabled>OK</DialogButton>
          <DialogButton type="button">Cancel</DialogButton>
          <DialogButton type="button">Help</DialogButton>
        </EditForm>
      </EditDialog>
    </Desktop>
  );
}
